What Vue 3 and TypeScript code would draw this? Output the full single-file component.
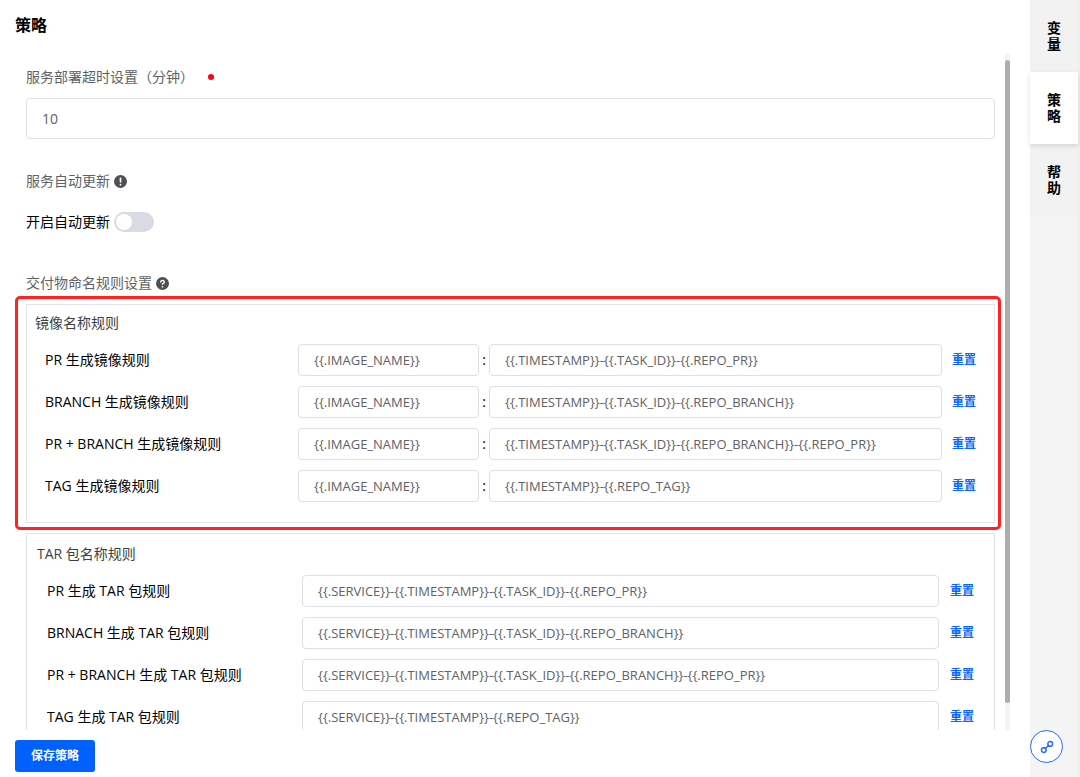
<script setup lang="ts">
import { ref, reactive } from 'vue'

interface Rule {
  id: string
  label: string
  template: string
}

const timeout = ref('10')
const autoUpdate = ref(false)
const imageName = '{{.IMAGE_NAME}}'

const imageRules = reactive<Rule[]>([
  { id: 'image-pr', label: 'PR 生成镜像规则', template: '{{.TIMESTAMP}}-{{.TASK_ID}}-{{.REPO_PR}}' },
  { id: 'image-branch', label: 'BRANCH 生成镜像规则', template: '{{.TIMESTAMP}}-{{.TASK_ID}}-{{.REPO_BRANCH}}' },
  { id: 'image-both', label: 'PR + BRANCH 生成镜像规则', template: '{{.TIMESTAMP}}-{{.TASK_ID}}-{{.REPO_BRANCH}}-{{.REPO_PR}}' },
  { id: 'image-tag', label: 'TAG 生成镜像规则', template: '{{.TIMESTAMP}}-{{.REPO_TAG}}' },
])

const tarRules = reactive<Rule[]>([
  { id: 'tar-pr', label: 'PR 生成 TAR 包规则', template: '{{.SERVICE}}-{{.TIMESTAMP}}-{{.TASK_ID}}-{{.REPO_PR}}' },
  { id: 'tar-branch', label: 'BRNACH 生成 TAR 包规则', template: '{{.SERVICE}}-{{.TIMESTAMP}}-{{.TASK_ID}}-{{.REPO_BRANCH}}' },
  { id: 'tar-both', label: 'PR + BRANCH 生成 TAR 包规则', template: '{{.SERVICE}}-{{.TIMESTAMP}}-{{.TASK_ID}}-{{.REPO_BRANCH}}-{{.REPO_PR}}' },
  { id: 'tar-tag', label: 'TAG 生成 TAR 包规则', template: '{{.SERVICE}}-{{.TIMESTAMP}}-{{.REPO_TAG}}' },
])

const defaults = new Map([...imageRules, ...tarRules].map((r) => [r.id, r.template]))

function reset(rule: Rule) {
  rule.template = defaults.get(rule.id) ?? ''
}

const tabs = ['变量', '策略', '帮助']
const activeTab = ref('策略')
</script>

<template>
  <div class="page">
    <main class="main">
      <h1 class="heading">策略</h1>
      <div class="viewport">
        <div class="content">
          <label class="label required" for="timeout">服务部署超时设置（分钟）</label>
          <input id="timeout" v-model="timeout" class="field large" type="text" />

          <div class="label update-label">
            服务自动更新
            <svg class="hint" viewBox="0 0 12 12" aria-hidden="true">
              <circle cx="6" cy="6" r="6" fill="#4e5054" />
              <path d="M6 3v3.4" stroke="#fff" stroke-width="1.5" stroke-linecap="round" />
              <circle cx="6" cy="8.9" r="0.8" fill="#fff" />
            </svg>
          </div>
          <div class="switch-row">
            <label for="auto">开启自动更新</label>
            <input id="auto" v-model="autoUpdate" class="switch" type="checkbox" role="switch" />
          </div>

          <div class="label naming-label">
            交付物命名规则设置
            <svg class="hint" viewBox="0 0 12 12" aria-hidden="true">
              <circle cx="6" cy="6" r="6" fill="#4e5054" />
              <path d="M4.4 4.6a1.6 1.5 0 1 1 2.4 1.3c-.6.3-.8.5-.8.9" fill="none" stroke="#fff" stroke-width="1.3" stroke-linecap="round" />
              <circle cx="6" cy="9" r="0.8" fill="#fff" />
            </svg>
          </div>

          <section class="group image-group">
            <h2 class="group-title">镜像名称规则</h2>
            <div v-for="rule in imageRules" :key="rule.id" class="rule">
              <label :for="rule.id">{{ rule.label }}</label>
              <input class="field" type="text" :value="imageName" :aria-label="rule.label" />
              <span class="colon">:</span>
              <input :id="rule.id" v-model="rule.template" class="field" type="text" />
              <button class="reset" type="button" @click="reset(rule)">重置</button>
            </div>
            <div class="highlight"></div>
          </section>

          <section class="group tar-group">
            <h2 class="group-title">TAR 包名称规则</h2>
            <div v-for="rule in tarRules" :key="rule.id" class="rule">
              <label :for="rule.id">{{ rule.label }}</label>
              <input :id="rule.id" v-model="rule.template" class="field" type="text" />
              <button class="reset" type="button" @click="reset(rule)">重置</button>
            </div>
          </section>
        </div>
        <div class="track"><div class="thumb"></div></div>
      </div>
      <footer class="footer">
        <button class="save" type="button">保存策略</button>
      </footer>
    </main>

    <nav class="side">
      <button
        v-for="tab in tabs"
        :key="tab"
        type="button"
        class="tab"
        :class="{ active: tab === activeTab }"
        @click="activeTab = tab"
      >
        {{ tab }}
      </button>
      <button class="link" type="button" aria-label="链接">
        <svg viewBox="0 0 14 14" fill="none" stroke="#1a6dff" stroke-width="1.4" stroke-linecap="round">
          <circle cx="3.8" cy="10.1" r="2.4" />
          <circle cx="10.2" cy="3.9" r="2.4" />
          <path d="M5.2 8.7L8.8 5.3" />
        </svg>
      </button>
    </nav>
  </div>
</template>

<style>
body {
  margin: 0;
}
</style>

<style scoped>
.page {
  display: flex;
  height: 100vh;
  background: #fff;
  color: #000;
  font: 14px/20px 'Open Sans', 'Noto Sans CJK SC', sans-serif;
}

.page *,
.page {
  box-sizing: border-box;
}

button,
input {
  font: inherit;
}

.main {
  flex: 1;
  min-width: 0;
  display: flex;
  flex-direction: column;
}

.heading {
  margin: 0;
  padding: 15px 15px 19px;
  font-size: 16px;
  line-height: 20px;
  font-weight: 700;
}

.viewport {
  flex: 1;
  min-height: 0;
  display: flex;
  padding-right: 20px;
}

.content {
  flex: 1;
  min-width: 0;
  overflow: hidden;
  padding: 13px 10px 0 26px;
}

.label {
  display: flex;
  align-items: center;
  gap: 4px;
  height: 20px;
  color: #606266;
}

.required::after {
  content: '';
  width: 6px;
  height: 6px;
  margin-left: 10px;
  border-radius: 50%;
  background: #ff0011;
}

.field {
  display: block;
  width: 100%;
  min-width: 0;
  height: 32px;
  padding: 0 15px;
  border: 1px solid #dcdfe6;
  border-radius: 4px;
  background: #fff;
  color: #606266;
  font-size: 13px;
  outline: none;
}

.field.large {
  height: 41px;
  margin-top: 11px;
  font-size: 14px;
}

.hint {
  width: 13px;
  height: 13px;
}

.update-label {
  margin-top: 32px;
}

.switch-row {
  display: flex;
  align-items: center;
  gap: 4px;
  height: 20px;
  margin-top: 21px;
}

.switch {
  appearance: none;
  display: flex;
  align-items: center;
  width: 40px;
  height: 20px;
  margin: 0;
  padding: 0 2px;
  border-radius: 10px;
  background: #d8dbe4;
}

.switch::before {
  content: '';
  width: 16px;
  height: 16px;
  border-radius: 50%;
  background: #fff;
}

.switch:checked {
  justify-content: flex-end;
  background: #0061ff;
}

.naming-label {
  margin-top: 41px;
}

.group {
  position: relative;
  border: 1px solid #e2e4ea;
}

.image-group {
  margin-top: 11px;
  padding: 8px 18px 10px 8px;
}

.tar-group {
  margin-top: 10px;
  padding: 10px 20px 18px 10px;
}

.group-title {
  margin: 0 0 11px;
  font-size: 14px;
  line-height: 20px;
  font-weight: 400;
  color: #3c3e42;
}

.rule {
  display: grid;
  align-items: center;
  margin-bottom: 10px;
  padding-left: 10px;
}

.image-group .rule {
  grid-template-columns: 253px 181px 10px 1fr 34px;
}

.tar-group .rule {
  grid-template-columns: 255px 1fr 35px;
}

.colon {
  text-align: center;
}

.reset {
  padding: 0;
  border: 0;
  background: none;
  color: #0b66ff;
  font-size: 12px;
  font-weight: 700;
  text-align: right;
  white-space: nowrap;
}

.highlight {
  position: absolute;
  inset: -9px -7px -8px -12px;
  border: 3px solid #ff2420;
  border-radius: 5px;
  pointer-events: none;
}

.track {
  width: 5px;
  padding-top: 6px;
  background: #f3f3f3;
}

.thumb {
  height: 96%;
  border-radius: 3px;
  background: #adadad;
}

.footer {
  padding: 10px 15px 5px;
}

.save {
  display: block;
  height: 32px;
  padding: 0 16px;
  border: 0;
  border-radius: 3px;
  background: #0061ff;
  color: #fff;
  font-size: 12px;
  font-weight: 700;
}

.side {
  position: relative;
  width: 50px;
  border-right: 2px solid #efefef;
  background: #f4f4f4;
}

.tab {
  display: block;
  width: 100%;
  height: 72px;
  padding: 0 17px;
  border: 0;
  background: #f2f2f2;
  color: #000;
  font-size: 14px;
  line-height: 16px;
  font-weight: 700;
  word-break: break-all;
}

.tab.active {
  position: relative;
  background: #fff;
  box-shadow: 0 2px 5px rgba(0, 0, 0, 0.12);
}

.link {
  position: absolute;
  left: 0;
  bottom: 14px;
  display: flex;
  align-items: center;
  justify-content: center;
  width: 33px;
  height: 33px;
  padding: 0;
  border: 1px solid #1a6dff;
  border-radius: 50%;
  background: #fff;
}

.link svg {
  width: 14px;
  height: 14px;
}
</style>
